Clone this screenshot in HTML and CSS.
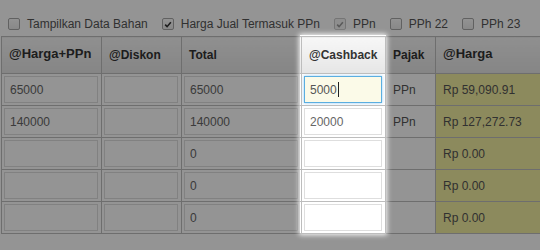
FILE: index.html
```html
<!DOCTYPE html>
<html lang="id">
<head>
  <meta charset="UTF-8">
  <meta name="viewport" content="width=device-width, initial-scale=1.0">
  <title>Harga Jual</title>
  <link rel="stylesheet" href="styles.css">
</head>
<body>
  <div class="page">
    <!-- Options -->
    <div class="options">
      <label class="opt"><span class="box"></span>Tampilkan Data Bahan</label>
      <label class="opt">
        <span class="box"><svg viewBox="0 0 12 12"><path d="M2.6 6.2 L4.9 8.6 L9.4 3.2"/></svg></span>Harga Jual Termasuk PPn
      </label>
      <label class="opt disabled">
        <span class="box"><svg viewBox="0 0 12 12"><path d="M2.6 6.2 L4.9 8.6 L9.4 3.2"/></svg></span>PPn
      </label>
      <label class="opt"><span class="box"></span>PPh 22</label>
      <label class="opt"><span class="box"></span>PPh 23</label>
    </div>

    <!-- Price table -->
    <table class="grid">
      <colgroup>
        <col class="c-harga-ppn">
        <col class="c-diskon">
        <col class="c-total">
        <col class="c-cashback">
        <col class="c-pajak">
        <col class="c-harga">
      </colgroup>
      <thead>
        <tr>
          <th class="big">@Harga+PPn</th>
          <th>@Diskon</th>
          <th>Total</th>
          <th>@Cashback</th>
          <th>Pajak</th>
          <th class="big">@Harga</th>
        </tr>
      </thead>
      <tbody>
        <tr>
          <td class="in"><input type="text" value="65000"></td>
          <td class="in"><input type="text" value=""></td>
          <td class="in"><input type="text" value="65000"></td>
          <td class="in"><div class="field focused">5000<span class="caret"></span></div></td>
          <td class="txt">PPn</td>
          <td class="txt harga">Rp 59,090.91</td>
        </tr>
        <tr>
          <td class="in"><input type="text" value="140000"></td>
          <td class="in"><input type="text" value=""></td>
          <td class="in"><input type="text" value="140000"></td>
          <td class="in"><input type="text" value="20000"></td>
          <td class="txt">PPn</td>
          <td class="txt harga">Rp 127,272.73</td>
        </tr>
        <tr>
          <td class="in"><input type="text" value=""></td>
          <td class="in"><input type="text" value=""></td>
          <td class="in"><input type="text" value="0"></td>
          <td class="in"><input type="text" value=""></td>
          <td class="txt"></td>
          <td class="txt harga">Rp 0.00</td>
        </tr>
        <tr>
          <td class="in"><input type="text" value=""></td>
          <td class="in"><input type="text" value=""></td>
          <td class="in"><input type="text" value="0"></td>
          <td class="in"><input type="text" value=""></td>
          <td class="txt"></td>
          <td class="txt harga">Rp 0.00</td>
        </tr>
        <tr>
          <td class="in"><input type="text" value=""></td>
          <td class="in"><input type="text" value=""></td>
          <td class="in"><input type="text" value="0"></td>
          <td class="in"><input type="text" value=""></td>
          <td class="txt"></td>
          <td class="txt harga">Rp 0.00</td>
        </tr>
      </tbody>
    </table>
  </div>

  <!-- Tour highlight over the Cashback column -->
  <div class="spotlight"></div>
</body>
</html>
```

FILE: styles.css
```css
/* Global reset */
* {
  margin: 0;
  padding: 0;
  box-sizing: border-box;
}

body {
  font-family: 'Liberation Sans', Arial, sans-serif;
  font-size: 12px;
  background-color: #fff;
  color: #555;
  overflow: hidden;
}

/* Options row */
.options {
  display: flex;
  align-items: center;
  gap: 14px;
  height: 20px;
  margin-top: 14px;
  margin-bottom: 2px;
  padding-left: 8px;
}

.opt {
  display: flex;
  align-items: center;
  white-space: nowrap;
  color: #555;
}

.opt .box {
  width: 12px;
  height: 12px;
  margin-right: 7px;
  border: 1px solid #a8a8a8;
  border-radius: 2px;
  background: linear-gradient(#fdfdfd, #ebebeb);
  display: flex;
  align-items: center;
  justify-content: center;
}

.opt .box svg {
  width: 11px;
  height: 11px;
  fill: none;
  stroke: #333;
  stroke-width: 1.9;
}

.opt.disabled .box {
  border-color: #cacaca;
  background: #f4f4f4;
}

.opt.disabled .box svg {
  stroke: #9a9a9a;
}

/* Table */
.grid {
  border-collapse: collapse;
  table-layout: fixed;
  width: 560px;
  margin-left: 1px;
}

.c-harga-ppn { width: 100px; }
.c-diskon { width: 80px; }
.c-total { width: 120px; }
.c-cashback { width: 84px; }
.c-pajak { width: 50px; }
.c-harga { width: 126px; }

.grid th,
.grid td {
  border: 1px solid #bdbdbd;
}

.grid th {
  height: 37px;
  padding: 0 7px;
  text-align: left;
  vertical-align: middle;
  font-size: 12px;
  font-weight: bold;
  color: #333;
  background: linear-gradient(#f7f7f7, #e6e6e6);
}

.grid th.big {
  font-size: 13px;
  padding-bottom: 3px;
}

.grid td {
  height: 32px;
  vertical-align: middle;
}

.grid td.in {
  padding: 2px 3px 2px 2px;
}

.grid td.txt {
  padding: 0 7px;
  color: #555;
}

.grid td.harga {
  background-color: #f2eea0;
}

.grid input,
.field {
  display: block;
  width: 100%;
  height: 27px;
  padding: 0 5px;
  border: 1px solid #dedede;
  background: transparent;
  font-family: 'Liberation Sans', Arial, sans-serif;
  font-size: 12px;
  color: #666;
  outline: none;
}

.field {
  display: flex;
  align-items: center;
}

.field.focused {
  border-color: #5aaee0;
  background-color: #fbfae8;
  box-shadow: 0 0 3px rgba(82, 168, 236, 0.6);
  color: #555;
}

.caret {
  display: inline-block;
  width: 1px;
  height: 15px;
  margin-left: 1px;
  background-color: #222;
}

/* Tour spotlight */
.spotlight {
  position: absolute;
  left: 300px;
  top: 35px;
  width: 86px;
  height: 199px;
  box-shadow: 0 0 5px 1px rgba(255, 255, 255, 0.95),
              0 0 0 2000px rgba(0, 0, 0, 0.42);
  pointer-events: none;
}
```
